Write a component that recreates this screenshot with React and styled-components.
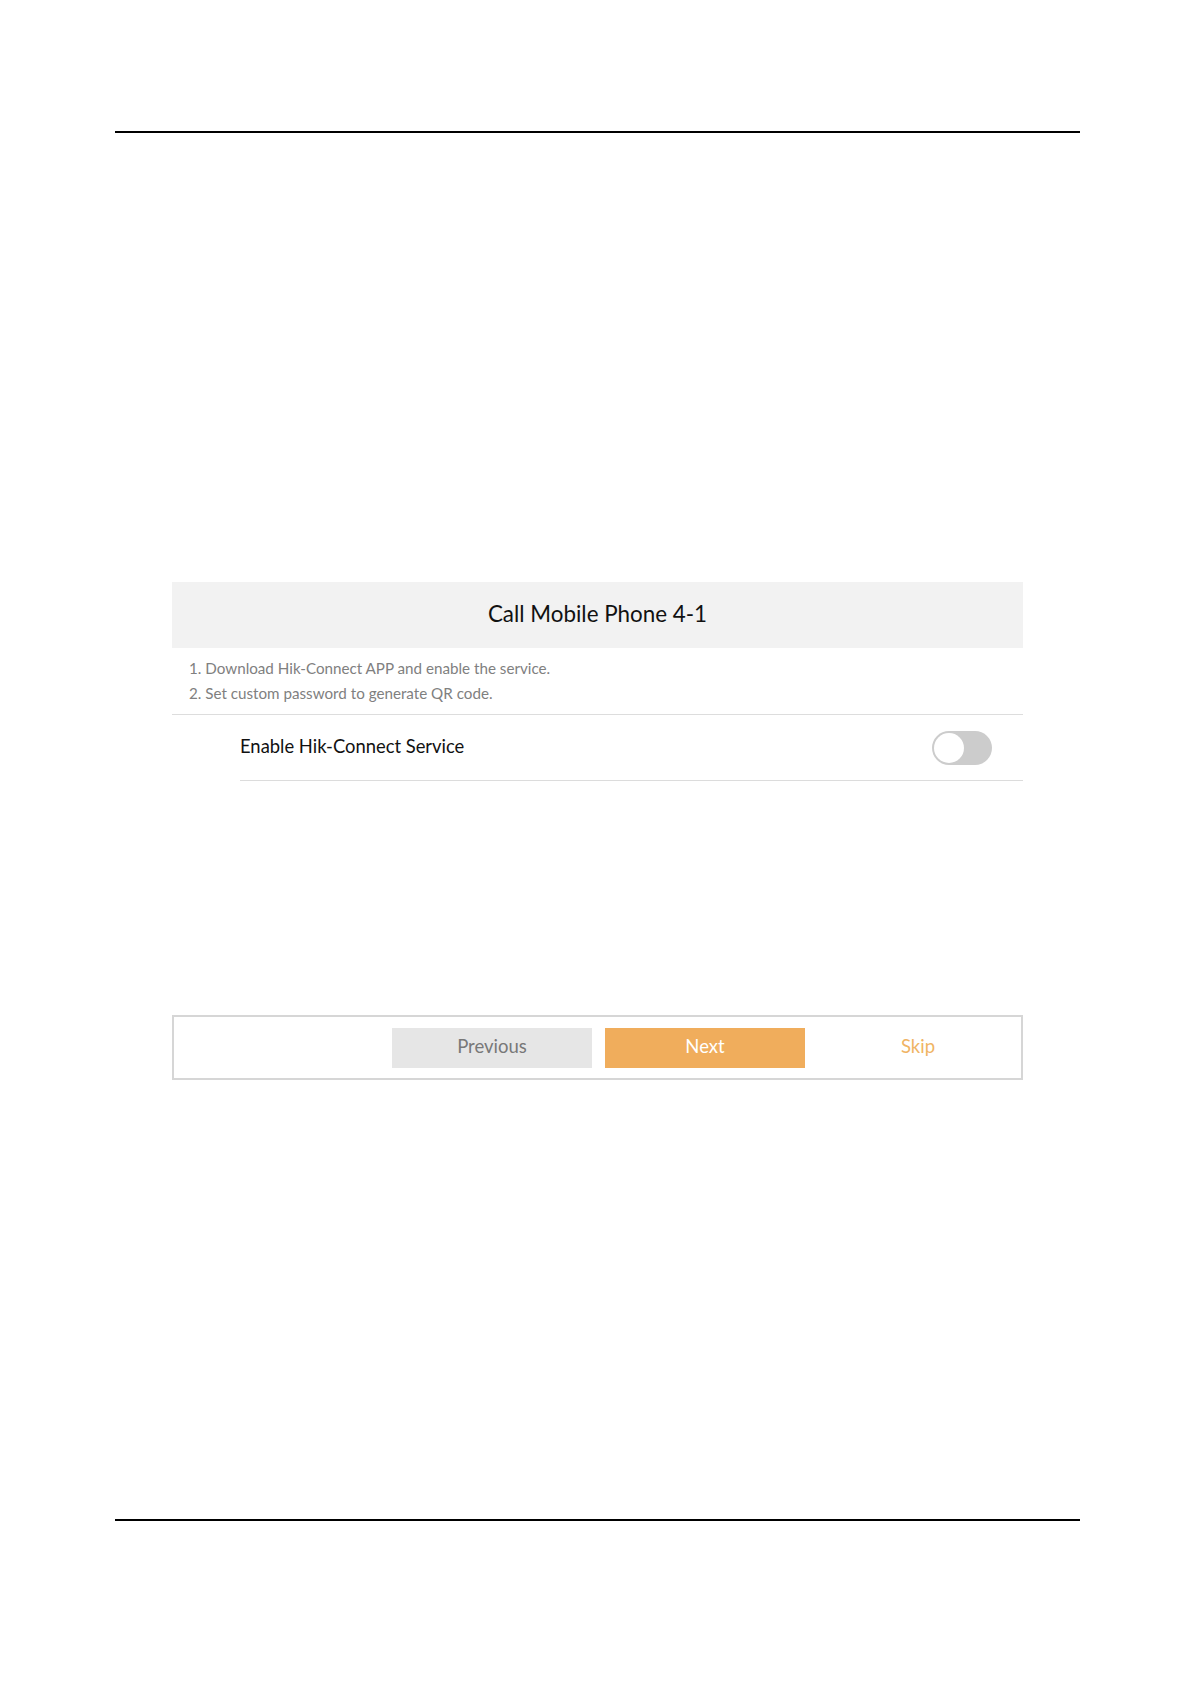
import React, { useState } from 'react';
import styled, { createGlobalStyle } from 'styled-components';

const GlobalStyle = createGlobalStyle`
  html, body {
    margin: 0;
    padding: 0;
    background: #ffffff;
  }
  body {
    font-family: Lato, "Open Sans", "Noto Sans", sans-serif;
    color: #1a1a1a;
  }
`;

const Page = styled.div`
  width: 1181px;
  height: 1685px;
  box-sizing: border-box;
  padding: 131px 101px 0 115px;
  display: flex;
  flex-direction: column;
`;

const Rule = styled.div`
  height: 2px;
  background: #000;
  flex-shrink: 0;
`;

const Spacer = styled.div`
  height: ${p => p.$h}px;
  flex-shrink: 0;
`;

const Panel = styled.div`
  width: 851px;
  margin-left: 57px;
  display: flex;
  flex-direction: column;
`;

const Header = styled.div`
  height: 66px;
  background: #f2f2f2;
  display: flex;
  align-items: center;
  justify-content: center;
  font-size: 22.4px;
  color: #111;
  padding-bottom: 4px;
  box-sizing: border-box;
`;

const Instructions = styled.div`
  height: 67px;
  padding: 0 0 2px 17px;
  box-sizing: border-box;
  display: flex;
  flex-direction: column;
  justify-content: center;
  gap: 7px;
  font-size: 15.2px;
  line-height: 18px;
  color: #808080;
  border-bottom: 1px solid #dddddd;
`;

const Row = styled.div`
  margin-left: 68px;
  height: 66px;
  box-sizing: border-box;
  display: flex;
  align-items: center;
  justify-content: space-between;
  padding-right: 31px;
  border-bottom: 1px solid #dcdcdc;
`;

const Label = styled.span`
  font-size: 18.4px;
  color: #111;
  margin-bottom: 4px;
`;

const Toggle = styled.button`
  width: 60px;
  height: 34px;
  border-radius: 17px;
  border: none;
  padding: 0;
  background: ${p => (p.$on ? '#f0ad5c' : '#cccccc')};
  position: relative;
  cursor: pointer;

  &::after {
    content: '';
    position: absolute;
    top: 2px;
    left: ${p => (p.$on ? '28px' : '2px')};
    width: 30px;
    height: 30px;
    border-radius: 50%;
    background: #fff;
    box-sizing: border-box;
  }
`;

const Footer = styled.div`
  height: 65px;
  box-sizing: border-box;
  border: 2px solid #d6d6d6;
  display: flex;
  align-items: center;
  padding-left: 218px;
  gap: 13px;
`;

const Button = styled.button`
  width: 200px;
  height: 40px;
  border: none;
  padding: 0 0 3px;
  font-family: inherit;
  font-size: 18.5px;
  background: ${p => (p.$primary ? '#f0ad5c' : p.$ghost ? 'transparent' : '#e6e6e6')};
  color: ${p => (p.$primary ? '#ffffff' : p.$ghost ? '#f0b464' : '#787878')};
  cursor: pointer;
`;

export default function App() {
  const [on, setOn] = useState(false);
  return (
    <>
      <GlobalStyle />
      <Page>
        <Rule />
        <Spacer $h={449} />
        <Panel>
          <Header>Call Mobile Phone 4-1</Header>
          <Instructions>
            <span>1. Download Hik-Connect APP and enable the service.</span>
            <span>2. Set custom password to generate QR code.</span>
          </Instructions>
          <Row>
            <Label>Enable Hik-Connect Service</Label>
            <Toggle $on={on} onClick={() => setOn(!on)} aria-label="Enable Hik-Connect Service" />
          </Row>
          <Spacer $h={234} />
          <Footer>
            <Button>Previous</Button>
            <Button $primary>Next</Button>
            <Button $ghost>Skip</Button>
          </Footer>
        </Panel>
        <Spacer $h={439} />
        <Rule />
      </Page>
    </>
  );
}
